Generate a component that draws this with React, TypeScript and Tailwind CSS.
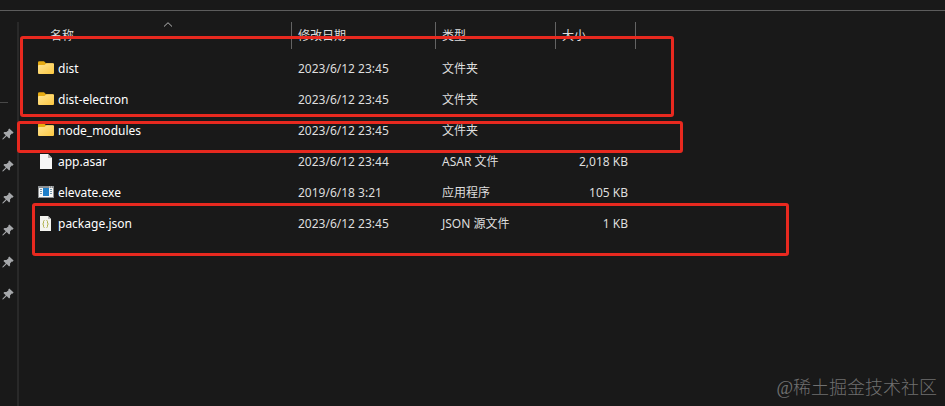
import { useState } from 'react';

type Kind = 'folder' | 'file' | 'exe' | 'json';

const files: { name: string; kind: Kind; date: string; type: string; size: string }[] = [
  { name: 'dist', kind: 'folder', date: '2023/6/12 23:45', type: '文件夹', size: '' },
  { name: 'dist-electron', kind: 'folder', date: '2023/6/12 23:45', type: '文件夹', size: '' },
  { name: 'node_modules', kind: 'folder', date: '2023/6/12 23:45', type: '文件夹', size: '' },
  { name: 'app.asar', kind: 'file', date: '2023/6/12 23:44', type: 'ASAR 文件', size: '2,018 KB' },
  { name: 'elevate.exe', kind: 'exe', date: '2019/6/18 3:21', type: '应用程序', size: '105 KB' },
  { name: 'package.json', kind: 'json', date: '2023/6/12 23:45', type: 'JSON 源文件', size: '1 KB' },
];

const columns = [
  { label: '名称', width: 'w-[272px]', indent: 'ml-6' },
  { label: '修改日期', width: 'w-36', indent: '' },
  { label: '类型', width: 'w-[120px]', indent: '' },
  { label: '大小', width: 'w-20', indent: '' },
];

const marks = [
  'left-5 top-[25px] w-[654px] h-[81px]',
  'left-[17px] top-[110px] w-[666px] h-8',
  'left-8 top-48 w-[757px] h-[53px]',
];

function FileIcon({ kind }: { kind: Kind }) {
  if (kind === 'folder') {
    return (
      <svg viewBox="0 0 16 16" className="mb-0.5 h-4 w-4 shrink-0">
        <defs>
          <linearGradient id="folder" x1="0" y1="0" x2="1" y2="1">
            <stop offset="0" stopColor="#ffe596" />
            <stop offset="1" stopColor="#fcc740" />
          </linearGradient>
        </defs>
        <path d="M0 2.500Q0 1.200 1.300 1.200H6L8 3.200H14.500Q16 3.200 16 4.700V8H0Z" fill="#e6ab12" />
        <path d="M0 6Q0 5 1 5H6.500L8.500 3.300H15Q16 3.300 16 4.300V13Q16 14 15 14H1Q0 14 0 13Z" fill="url(#folder)" />
      </svg>
    );
  }
  if (kind === 'exe') {
    return (
      <svg viewBox="0 0 16 16" className="mb-0.5 h-4 w-4 shrink-0">
        <rect x="0" y="2" width="16" height="12" fill="#8c9093" />
        <rect x="1" y="4" width="14" height="9" fill="#f7f7f7" />
        <rect x="5" y="4" width="6" height="8" fill="#1f7fc9" />
        <path d="M2 5.500h2M2 7.500h2M2 9.500h2M12 5.500h2M12 7.500h2M12 9.500h2" stroke="#7396ad" />
        <path d="M11 3h1M13 3h1" stroke="#f2f2f2" />
      </svg>
    );
  }
  if (kind === 'json') {
    return (
      <svg viewBox="0 0 16 16" className="mb-0.5 h-4 w-4 shrink-0">
        <path d="M2 1H10L13 4V16H2Z" fill="#f4f4f0" />
        <path d="M10 1V4H13Z" fill="#b9b9b9" />
        <path d="M6.500 5.500Q5.500 5.500 5.500 6.500V8L4.700 9L5.500 10V11.500Q5.500 12.500 6.500 12.500M8.500 5.500Q9.500 5.500 9.500 6.500V8L10.300 9L9.500 10V11.500Q9.500 12.500 8.500 12.500" fill="none" stroke="#aeb04a" />
      </svg>
    );
  }
  return (
    <svg viewBox="0 0 16 16" className="mb-0.5 h-4 w-4 shrink-0">
      <path d="M2 1H10L14 5V16H2Z" fill="#f6f6f6" />
      <path d="M10 1V5H14Z" fill="#b4b4b4" />
    </svg>
  );
}

function PinIcon() {
  return (
    <svg viewBox="0 0 12 12" className="h-3 w-3">
      <path d="M7.300 0.400L11.600 4.600L10.500 5.700L9.800 5.500L8 7.500L8.100 9.400L7.100 10.400L4.700 8.100L1.300 11.200L0.300 11.600L0.600 10.600L3.800 7.300L1.400 5L2.400 4L4.400 4.100L6.500 2.300L6.300 1.500Z" fill="#a6a8ab" />
    </svg>
  );
}

export default function App() {
  const [asc, setAsc] = useState(true);
  const rows = asc ? files : [...files].reverse();

  return (
    <div className="flex min-h-screen flex-col bg-[#191919] pt-2.5 font-['Noto_Sans','Noto_Sans_CJK_SC',sans-serif] text-xs text-[#dedede]">
      <div className="relative flex flex-1 border-t border-[#5c5c5c]">
        {/* Quick access pins */}
        <aside className="mt-[11px] w-5 shrink-0">
          <div className="h-full w-[19px] border-r-2 border-[#292929] pt-20">
            <hr className="w-2 border-[#484848]" />
            <ul className="pt-[15px]">
              {Array.from({ length: 6 }).map((_, i) => (
                <li key={i} className="flex h-8 items-center pl-0.5"><PinIcon /></li>
              ))}
            </ul>
          </div>
        </aside>

        {/* File list */}
        <main className="min-w-0 flex-1 pt-[11px]">
          <table className="w-[616px] table-fixed border-collapse text-left">
            <thead>
              <tr>
                {columns.map((col, i) => (
                  <th key={col.label} className={`${col.width} p-0 pb-1 font-normal`}>
                    <div className="h-[27px] border-r border-[#636363]">
                      <button type="button" onClick={() => i === 0 && setAsc(!asc)} className={`relative flex h-full items-center px-1.5 ${col.indent} ${i === 0 ? 'w-[247px]' : 'w-full'}`}>
                        {col.label}
                        {i === 0 && (
                          <svg viewBox="0 0 9 5" className={`absolute left-1/2 top-0 h-[5px] w-[9px] -translate-x-1/2 ${asc ? '' : 'rotate-180'}`}>
                            <path d="M0.500 4.500L4.500 0.700L8.500 4.500" fill="none" stroke="#b5b5b5" />
                          </svg>
                        )}
                      </button>
                    </div>
                  </th>
                ))}
              </tr>
            </thead>
            <tbody>
              {rows.map((file) => (
                <tr key={file.name} className="h-[31px]">
                  <td className="p-0 pl-[18px]">
                    <div className="flex items-center gap-1 text-white">
                      <FileIcon kind={file.kind} />
                      <span>{file.name}</span>
                    </div>
                  </td>
                  <td className="p-0 pl-1.5">{file.date}</td>
                  <td className="p-0 pl-1.5">{file.type}</td>
                  <td className="p-0 pr-2 text-right">{file.size}</td>
                </tr>
              ))}
            </tbody>
          </table>
        </main>

        {/* Red highlight frames */}
        {marks.map((pos) => (
          <div key={pos} className={`pointer-events-none absolute rounded-[3px] border-3 border-[#e8291f] ${pos}`} />
        ))}

        <p className="absolute bottom-1 right-2 font-['Liberation_Serif','Noto_Sans_CJK_SC',serif] text-lg font-light text-[#707070]">@稀土掘金技术社区</p>
      </div>
    </div>
  );
}
